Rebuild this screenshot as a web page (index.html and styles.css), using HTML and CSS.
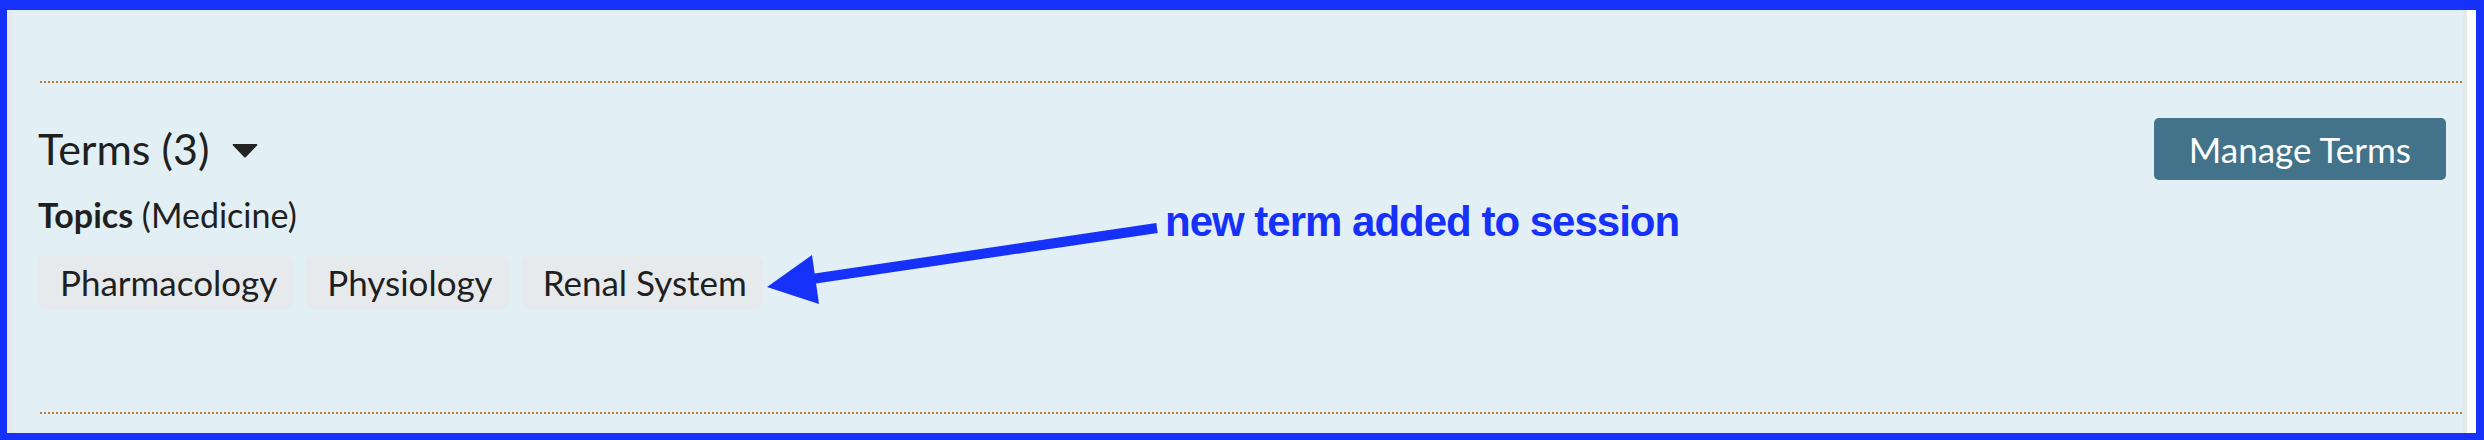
FILE: index.html
```html
<!DOCTYPE html>
<html lang="en">
<head>
    <meta charset="UTF-8">
    <meta name="viewport" content="width=device-width, initial-scale=1.0">
    <title>Session: Terms</title>
    <link rel="stylesheet" href="styles.css">
</head>
<body>
    <div class="frame">
        <div class="panel">

            <div class="terms-section">
                <div class="terms-header">
                    <h2 class="terms-title">
                        Terms (3)
                        <svg class="caret" width="26" height="15" viewBox="0 0 26 15">
                            <path d="M1.5 1 L24.5 1 Q26 1 25 2.4 L14.2 13.8 Q13 15 11.8 13.8 L1 2.4 Q0 1 1.5 1 Z" fill="#222"/>
                        </svg>
                    </h2>
                    <button class="manage-btn" type="button">Manage Terms</button>
                </div>

                <div class="vocab-label"><strong>Topics</strong> (Medicine)</div>

                <ul class="tag-list">
                    <li class="tag">Pharmacology</li>
                    <li class="tag">Physiology</li>
                    <li class="tag">Renal System</li>
                </ul>
            </div>

            <!-- annotation drawn over the screenshot -->
            <svg class="note-arrow" width="430" height="120" viewBox="0 0 430 120">
                <line x1="55" y1="80" x2="407" y2="28" stroke="#1631f9" stroke-width="10"/>
                <polygon points="17,87 62,55 69,104" fill="#1631f9"/>
            </svg>
            <div class="note-text">new term added to session</div>
        </div>
    </div>
</body>
</html>
```

FILE: styles.css
```css
body {
    margin: 0;
    padding: 0;
    font-family: Lato, "Noto Sans", sans-serif;
    color: #1f1f1f;
}

.frame {
    box-sizing: border-box;
    height: 440px;
    border-style: solid;
    border-color: #1631f9;
    border-width: 10px 8px 7px 7px;
    background-color: #fff;
}

.panel {
    position: relative;
    box-sizing: border-box;
    height: 100%;
    margin-right: 9px;
    padding: 71px 1px 0 26px;
    border-left: 5px solid #e6e9ea;
    border-right: 4px solid #e6e9ea;
    background-color: #e2eff5;
}

/* square dots, top and bottom */
.terms-section {
    padding: 37px 16px 105px 0;
    background:
        repeating-linear-gradient(90deg, #c97a2e 0 2px, transparent 2px 4px) 2px top / calc(100% - 2px) 2px no-repeat,
        repeating-linear-gradient(90deg, #c97a2e 0 2px, transparent 2px 4px) 2px bottom / calc(100% - 2px) 2px no-repeat;
}

.terms-header {
    display: flex;
    align-items: center;
    justify-content: space-between;
    height: 62px;
}

.terms-title {
    display: flex;
    align-items: center;
    gap: 23px;
    margin: 0;
    font-size: 43px;
    font-weight: normal;
    line-height: 50px;
}

.caret {
    margin-top: 3px;
}

.manage-btn {
    height: 62px;
    padding: 0 35px;
    border: none;
    border-radius: 5px;
    background-color: #42738a;
    color: #fff;
    font-family: Lato, "Noto Sans", sans-serif;
    font-size: 35px;
    cursor: pointer;
}

.vocab-label {
    margin-top: 15px;
    font-size: 34px;
    line-height: 40px;
}

.tag-list {
    display: flex;
    gap: 12px;
    margin: 21px 0 0 0;
    padding: 0;
    list-style: none;
}

.tag {
    height: 53px;
    padding: 0 16px 0 22px;
    border-radius: 8px;
    background-color: #e6eaec;
    font-size: 35px;
    line-height: 53px;
}

.note-arrow {
    position: absolute;
    left: 738px;
    top: 190px;
}

.note-text {
    position: absolute;
    left: 1153px;
    top: 191px;
    color: #1631f9;
    font-family: "Liberation Sans", Arial, sans-serif;
    font-weight: bold;
    font-size: 42px;
    line-height: 42px;
    letter-spacing: -1px;
    white-space: nowrap;
}
```
